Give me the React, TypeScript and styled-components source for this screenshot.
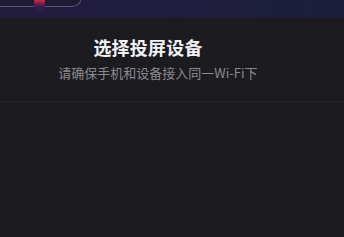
import React from 'react';
import styled, { createGlobalStyle } from 'styled-components';

const Global = createGlobalStyle`
  html, body {
    margin: 0;
    padding: 0;
    background: #1c1b20;
  }
  body {
    font-family: "Noto Sans CJK SC", "Noto Sans", sans-serif;
  }
`;

const Page = styled.div`
  width: 344px;
  height: 237px;
  display: flex;
  flex-direction: column;
  overflow: hidden;
`;

const TopBar = styled.div`
  height: 18px;
  flex-shrink: 0;
  background: linear-gradient(90deg, #231c3d 0%, #1f1d3e 50%, #1b1e3a 100%);
  overflow: hidden;
`;

const PlayerCard = styled.div`
  width: 82px;
  height: 20px;
  margin-top: -13px;
  box-sizing: border-box;
  border-bottom: 1.5px solid #5d5577;
  border-right: 1.5px solid #5d5577;
  border-bottom-right-radius: 10px;
  background: #1e1934;
  display: flex;
  align-items: flex-start;
  padding-left: 34px;
`;

const Cover = styled.div`
  width: 11px;
  height: 26px;
  flex-shrink: 0;
  border-radius: 0 0 3px 3px;
  background: linear-gradient(
    180deg,
    #2a1a3e 0%,
    #8a2040 42%,
    #c42a3e 52%,
    #7a2048 62%,
    #3a1c4a 75%,
    #241b40 100%
  );
`;

const Sheet = styled.div`
  flex: 1;
  background: #1c1b20;
  display: flex;
  flex-direction: column;
`;

const Header = styled.div`
  height: 84px;
  display: flex;
  flex-direction: column;
  align-items: center;
  padding-top: 16px;
  box-sizing: border-box;
  border-bottom: 1px solid #26252b;
`;

const Title = styled.div`
  color: #f2f2f4;
  font-size: 18px;
  font-weight: 700;
  line-height: 26px;
  margin-right: 48px;
  letter-spacing: 0.2px;
`;

const Subtitle = styled.div`
  margin-top: 4px;
  color: #8b8a90;
  font-size: 13px;
  line-height: 18px;
  margin-right: 28px;
`;

const App = () => {
  return (
    <>
      <Global />
      <Page>
        <TopBar>
          <PlayerCard>
            <Cover />
          </PlayerCard>
        </TopBar>
        <Sheet>
          <Header>
            <Title>选择投屏设备</Title>
            <Subtitle>请确保手机和设备接入同一Wi-Fi下</Subtitle>
          </Header>
        </Sheet>
      </Page>
    </>
  );
};

export default App;
